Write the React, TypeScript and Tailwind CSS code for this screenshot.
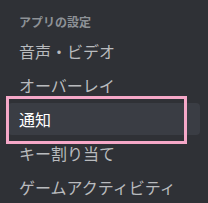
import React from 'react';

const items = ['音声・ビデオ', 'オーバーレイ', '通知', 'キー割り当て', 'ゲームアクティビティ'];

export default function App() {
  const selected = '通知';

  return (
    <div
      className="relative w-[208px] h-[203px] overflow-hidden bg-[#2f3136] pt-[14px] pl-[8px] pr-[8px]"
      style={{ fontFamily: '"Noto Sans CJK JP", "Noto Sans", sans-serif' }}
    >
      <div className="h-4 pl-[11px] text-[12px] leading-4 font-bold text-[#8e9297] whitespace-nowrap">
        アプリの設定
      </div>
      <div className="mt-[5px] flex flex-col gap-[2px]">
        {items.map((item) => (
          <div
            key={item}
            className={
              item === selected
                ? 'h-8 flex items-center pl-[11px] rounded-[4px] bg-[#3a3d44] text-[16px] leading-5 text-white whitespace-nowrap'
                : 'h-8 flex items-center pl-[11px] rounded-[4px] text-[16px] leading-5 text-[#b9bbbe] whitespace-nowrap'
            }
          >
            {item}
          </div>
        ))}
      </div>
      {/* highlight annotation */}
      <div className="absolute left-[6px] top-[96px] w-[181px] h-[48px] border-[3px] border-[#f5a8c8] pointer-events-none" />
    </div>
  );
}
